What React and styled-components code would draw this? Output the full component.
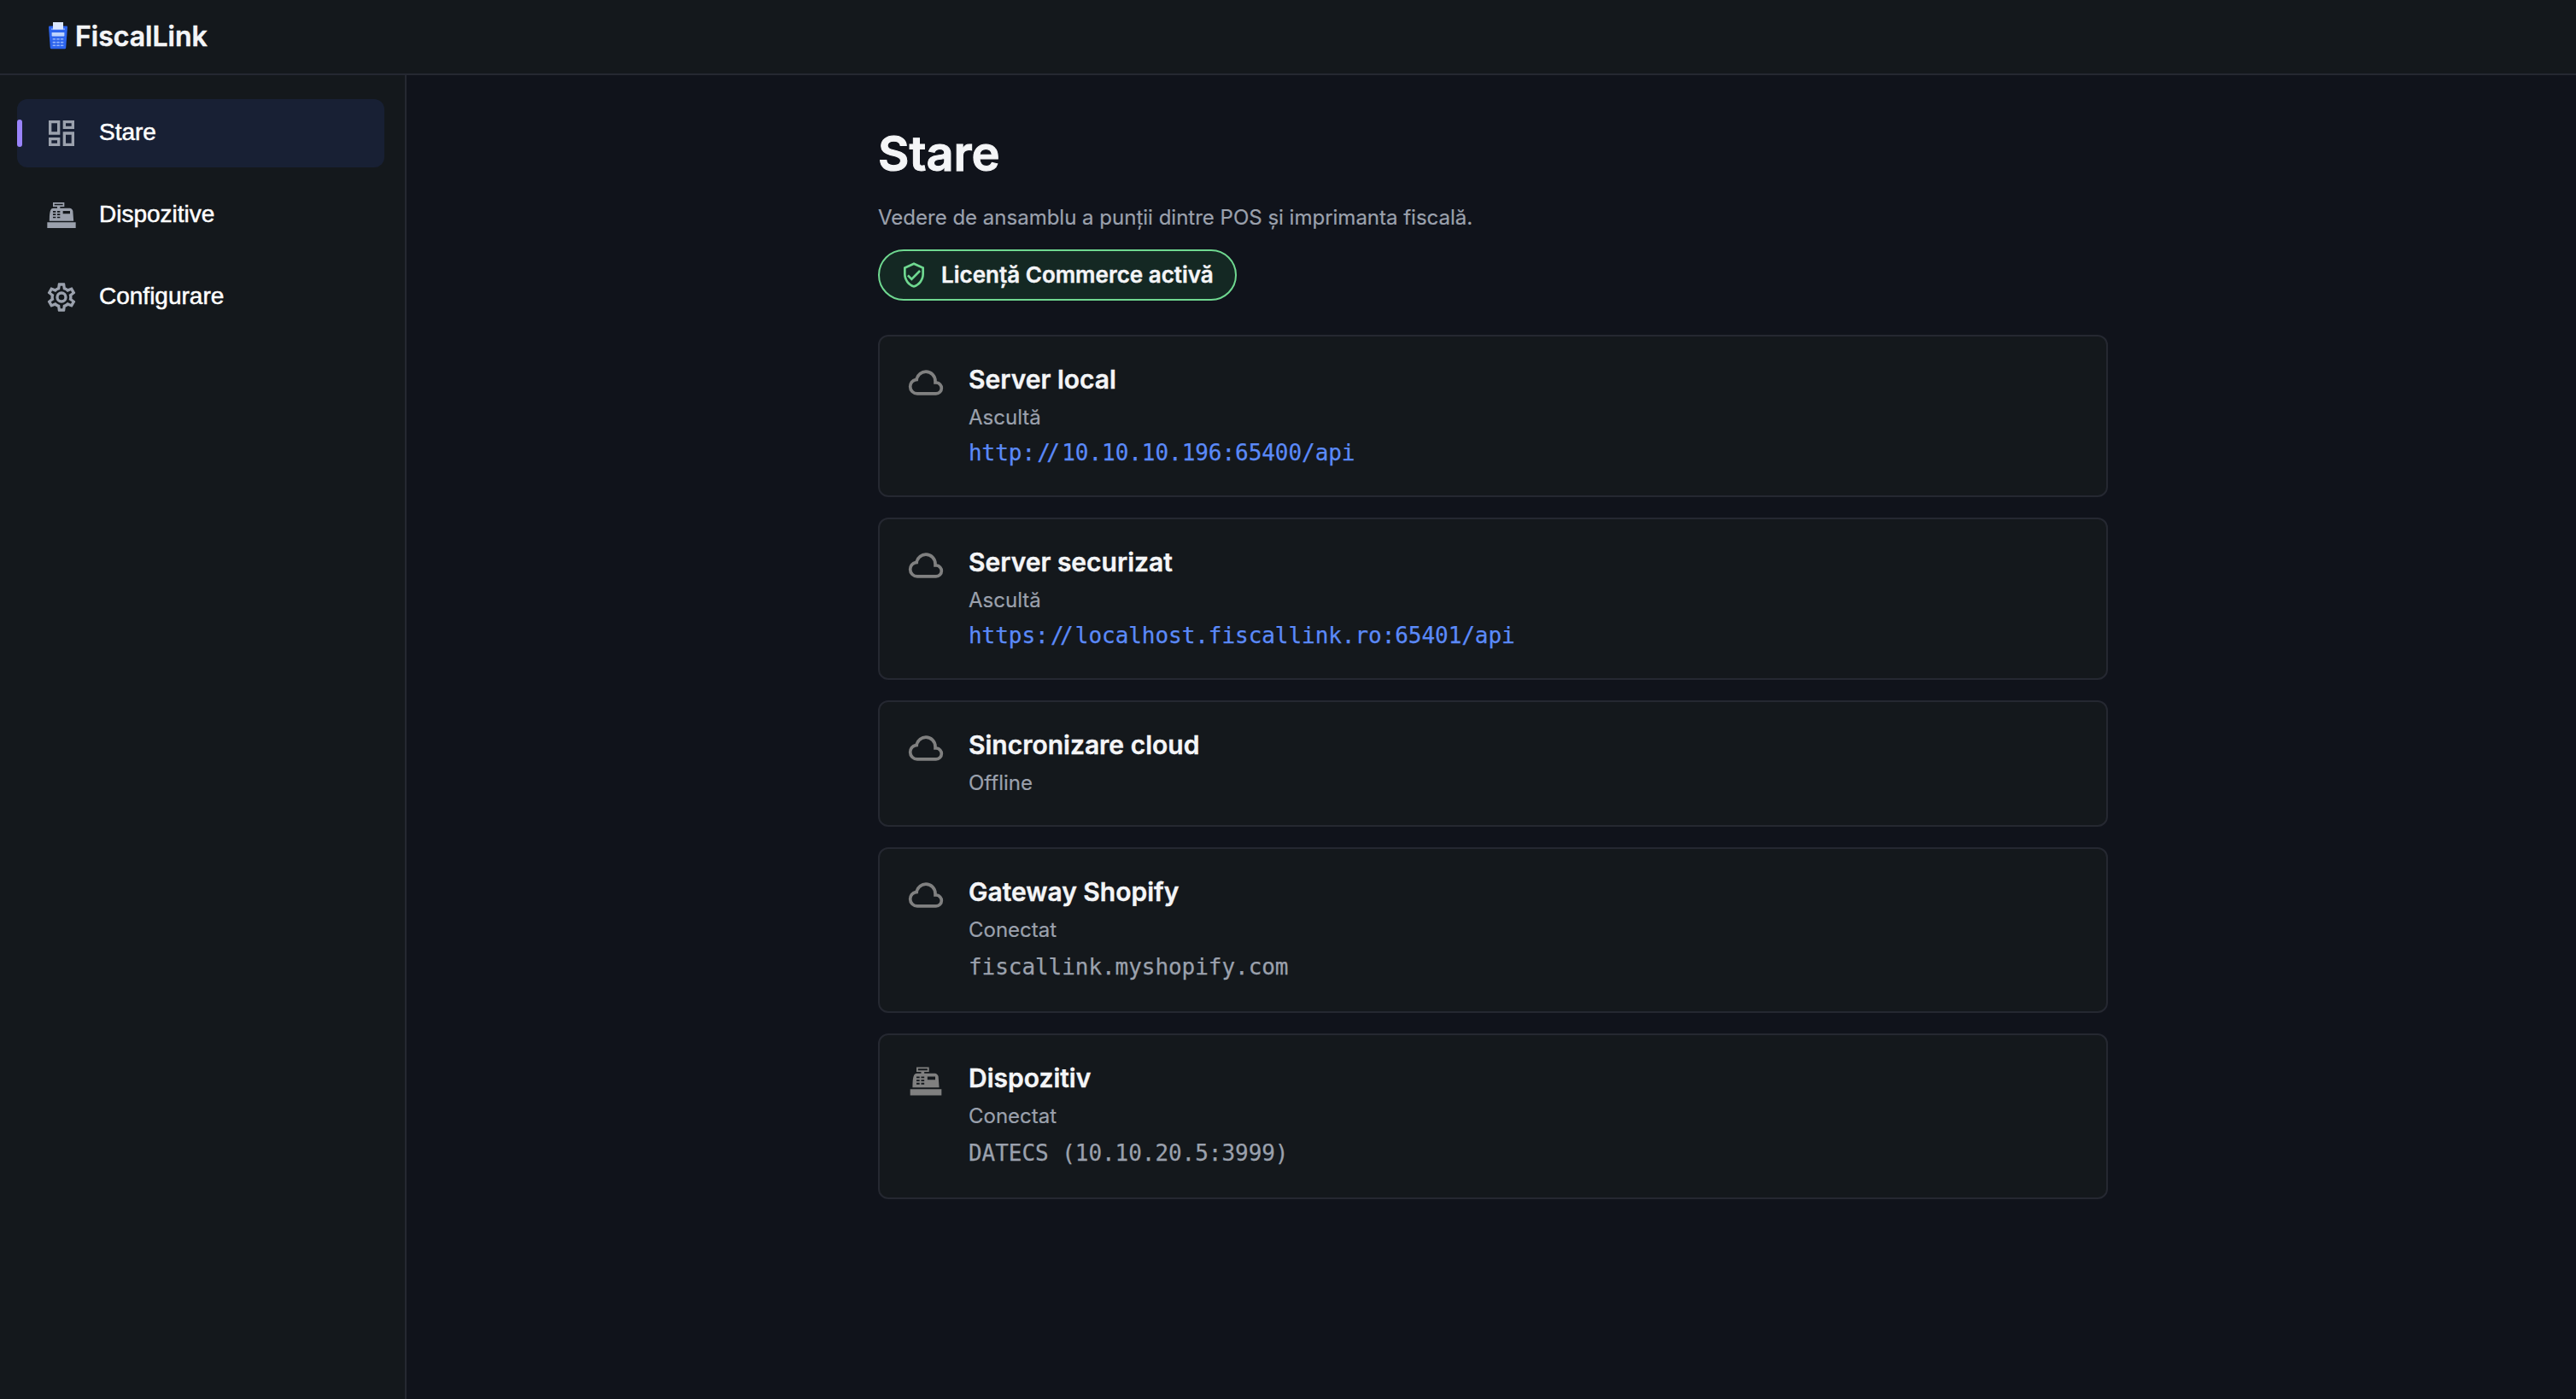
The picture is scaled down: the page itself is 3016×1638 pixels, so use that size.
import React from "react";
import styled, { createGlobalStyle } from "styled-components";

const Global = createGlobalStyle`
  * { box-sizing: border-box; }
  body { margin: 0; background: #10131b; font-family: Inter, "Liberation Sans", sans-serif; -webkit-font-smoothing: antialiased; }
  h1, h2, p { margin: 0; }
`;

const Page = styled.div`
  display: flex;
  flex-direction: column;
  min-height: 100vh;
`;

const Header = styled.header`
  display: flex;
  align-items: center;
  gap: 8px;
  height: 88px;
  padding: 0 0 2px 56px;
  border-bottom: 2px solid #252831;
  background: #14181c;
`;

const Brand = styled.span`
  padding-top: 1px;
  font-size: 32px;
  line-height: 40px;
  font-weight: 600;
  color: #f4f5f7;
  -webkit-text-stroke: 0.5px #f4f5f7;
`;

const Body = styled.div`
  display: flex;
  flex: 1;
`;

const Sidebar = styled.nav`
  display: flex;
  flex-direction: column;
  gap: 16px;
  flex: 0 0 476px;
  padding: 28px 24px 0 20px;
  border-right: 2px solid #252831;
  background: #14181c;
`;

const NavItem = styled.a`
  display: flex;
  align-items: center;
  height: 80px;
  border-radius: 12px;
  background: ${(p) => (p.$active ? "#182034" : "transparent")};
  color: #fff;
  font-family: "Liberation Sans", Arial, sans-serif;
  font-size: 28px;
  line-height: 40px;
  -webkit-text-stroke: 0.5px #fff;
`;

const Indicator = styled.span`
  width: 6px;
  height: 32px;
  margin-right: 26px;
  border-radius: 3px;
  background: ${(p) => (p.$active ? "#9a84fb" : "transparent")};
`;

const NavLabel = styled.span`
  margin-left: 24px;
  padding-bottom: 2px;
`;

const Glyph = styled.svg`
  flex: none;
  width: ${(p) => p.$size}px;
  height: ${(p) => p.$size}px;
  fill: ${(p) => p.$color};
`;

const Main = styled.main`
  display: flex;
  justify-content: center;
  flex: 1;
  padding: 56px 0 0 4px;
`;

const Content = styled.div`
  display: flex;
  flex-direction: column;
  align-items: flex-start;
  width: 1440px;
`;

const Title = styled.h1`
  font-size: 56px;
  line-height: 72px;
  font-weight: 600;
  color: #f4f5f7;
  -webkit-text-stroke: 1px #f4f5f7;
`;

const Subtitle = styled.p`
  margin-top: 19px;
  font-size: 24px;
  line-height: 40px;
  color: #9ba1ad;
  -webkit-text-stroke: 0.2px #9ba1ad;
`;

const License = styled.div`
  display: flex;
  align-items: center;
  gap: 16px;
  height: 60px;
  margin-top: 17px;
  padding: 0 25px 0 24px;
  border: 2px solid #6fd890;
  border-radius: 30px;
  background: #142823;
  font-size: 26px;
  line-height: 40px;
  font-weight: 600;
  color: #f4f5f7;
  -webkit-text-stroke: 0.4px #f4f5f7;
`;

const CardList = styled.div`
  display: flex;
  flex-direction: column;
  gap: 24px;
  width: 100%;
  margin-top: 40px;
`;

const Card = styled.section`
  display: flex;
  gap: 28px;
  padding: 30px 32px 29px;
  border: 2px solid #252831;
  border-radius: 12px;
  background: #14181c;
`;

const IconSlot = styled.div`
  display: flex;
  flex: none;
  padding-top: 2px;
`;

const CardBody = styled.div`
  display: flex;
  flex-direction: column;
  align-items: flex-start;
`;

const CardTitle = styled.h2`
  font-size: 30px;
  line-height: 40px;
  font-weight: 600;
  color: #f4f5f7;
  -webkit-text-stroke: 0.4px #f4f5f7;
`;

const Status = styled.p`
  margin-top: 5px;
  font-size: 24px;
  line-height: 40px;
  color: #9ba1ad;
  -webkit-text-stroke: 0.2px #9ba1ad;
`;

const mono = `
  font-family: "DejaVu Sans Mono", "Liberation Mono", monospace;
  font-size: 26px;
  letter-spacing: -0.052px;
  white-space: pre;
  -webkit-text-stroke: 0.25px currentColor;
`;

const Link = styled.a`
  ${mono}
  line-height: 42px;
  color: #5b8af9;
`;

const Detail = styled.p`
  ${mono}
  margin-top: 1px;
  padding-bottom: 1px;
  line-height: 44px;
  color: #9ba1ad;
`;

const Slashes = styled.span`
  padding-left: 2.3px;
  padding-right: 2.3px;
`;

const FirstSlash = styled.span`
  letter-spacing: -4.65px;
`;

const paths = {
  dashboard:
    "M19,5V7H15V5H19M9,5V11H5V5H9M19,13V19H15V13H19M9,17V19H5V17H9M21,3H13V9H21V3M11,3H3V13H11V3M21,11H13V21H21V11M11,15H3V21H11V15Z",
  register:
    "M2,17H22V21H2V17M6.25,7H9V6H6V3H14V6H11V7H17.8C18.8,7 19.8,8 20,9L20.5,16H3.5C3.55,9 4.3,7 6.25,7M13,9V11H18V9H13M6,9V10H8V9H6M9,9V10H11V9H9M6,11V12H8V11H6M9,11V12H11V11H9M6,13V14H8V13H6M9,13V14H11V13H9M7,4V5H13V4H7Z",
  cog: "M12,8A4,4 0 0,1 16,12A4,4 0 0,1 12,16A4,4 0 0,1 8,12A4,4 0 0,1 12,8M12,10A2,2 0 0,0 10,12A2,2 0 0,0 12,14A2,2 0 0,0 14,12A2,2 0 0,0 12,10M10,22C9.75,22 9.54,21.82 9.5,21.58L9.13,18.93C8.5,18.68 7.96,18.34 7.44,17.94L4.95,18.95C4.73,19.03 4.46,18.95 4.34,18.73L2.34,15.27C2.21,15.05 2.27,14.78 2.46,14.63L4.57,12.97L4.5,12L4.57,11L2.46,9.37C2.27,9.22 2.21,8.95 2.34,8.73L4.34,5.27C4.46,5.05 4.73,4.96 4.95,5.05L7.44,6.05C7.96,5.66 8.5,5.32 9.13,5.07L9.5,2.42C9.54,2.18 9.75,2 10,2H14C14.25,2 14.46,2.18 14.5,2.42L14.87,5.07C15.5,5.32 16.04,5.66 16.56,6.05L19.05,5.05C19.27,4.96 19.54,5.05 19.66,5.27L21.66,8.73C21.79,8.95 21.73,9.22 21.54,9.37L19.43,11L19.5,12L19.43,13L21.54,14.63C21.73,14.78 21.79,15.05 21.66,15.27L19.66,18.73C19.54,18.95 19.27,19.04 19.05,18.95L16.56,17.95C16.04,18.34 15.5,18.68 14.87,18.93L14.5,21.58C14.46,21.82 14.25,22 14,22H10M11.25,4L10.88,6.61C9.68,6.86 8.62,7.5 7.85,8.39L5.44,7.35L4.69,8.65L6.8,10.2C6.4,11.37 6.4,12.64 6.8,13.8L4.68,15.36L5.43,16.66L7.86,15.62C8.63,16.5 9.68,17.14 10.87,17.38L11.24,20H12.76L13.13,17.39C14.32,17.14 15.37,16.5 16.14,15.62L18.57,16.66L19.32,15.36L17.2,13.81C17.6,12.64 17.6,11.37 17.2,10.2L19.31,8.65L18.56,7.35L16.15,8.39C15.38,7.5 14.32,6.86 13.12,6.62L12.75,4H11.25Z",
  shield:
    "M21,11C21,16.55 17.16,21.74 12,23C6.84,21.74 3,16.55 3,11V5L12,1L21,5V11M12,21C15.75,20 19,15.54 19,11.22V6.3L12,3.18L5,6.3V11.22C5,15.54 8.25,20 12,21M10,17L6,13L7.41,11.59L10,14.17L16.59,7.58L18,9",
  cloud:
    "M6.5 20Q4.22 20 2.61 18.43 1 16.85 1 14.58 1 12.63 2.17 11.1 3.35 9.57 5.25 9.15 5.88 6.85 7.75 5.43 9.63 4 12 4 14.93 4 16.96 6.04 19 8.07 19 11 20.73 11.2 21.86 12.5 23 13.78 23 15.5 23 17.38 21.69 18.69 20.38 20 18.5 20M6.5 18H18.5Q19.55 18 20.27 17.27 21 16.55 21 15.5 21 14.45 20.27 13.73 19.55 13 18.5 13H17V11Q17 8.93 15.54 7.46 14.08 6 12 6 9.93 6 8.46 7.46 7 8.93 7 11H6.5Q5.05 11 4.03 12.03 3 13.05 3 14.5 3 15.95 4.03 17 5.05 18 6.5 18Z",
};

function Icon({ name, size, color }) {
  return (
    <Glyph viewBox="0 0 24 24" $size={size} $color={color} aria-hidden="true">
      <path d={paths[name]} />
    </Glyph>
  );
}

function Logo() {
  return (
    <svg width="24" height="34" viewBox="0 0 24 34" aria-hidden="true">
      <path d="M1 6.5Q1 5.5 2 5.5H22Q23 5.5 23 6.5L21.2 31Q21 32.2 19.8 32.2H4.2Q3 32.2 2.8 31Z" fill="#2c64ee" />
      <rect x="4" y="8.4" width="16" height="1.4" fill="#8fb0fa" />
      <rect x="6" y="1" width="12" height="8.4" fill="#dbe7fe" />
      <rect x="4.6" y="13" width="14.8" height="4.4" rx="0.6" fill="#bdd3fd" />
      {[20, 23.8, 27.4].map((y) =>
        [5.6, 10.2, 14.8].map((x) => (
          <rect key={`${x}-${y}`} x={x} y={y} width="3.6" height="1.6" rx="0.6" fill="#93b4fb" />
        ))
      )}
    </svg>
  );
}

function Url({ text }) {
  const [scheme, rest] = text.split("//");
  return (
    <Link>
      {scheme}
      <Slashes>
        <FirstSlash>/</FirstSlash>/
      </Slashes>
      {rest}
    </Link>
  );
}

const nav = [
  { label: "Stare", icon: "dashboard", active: true },
  { label: "Dispozitive", icon: "register" },
  { label: "Configurare", icon: "cog" },
];

const cards = [
  { title: "Server local", icon: "cloud", status: "Ascultă", url: "http://10.10.10.196:65400/api" },
  { title: "Server securizat", icon: "cloud", status: "Ascultă", url: "https://localhost.fiscallink.ro:65401/api" },
  { title: "Sincronizare cloud", icon: "cloud", status: "Offline" },
  { title: "Gateway Shopify", icon: "cloud", status: "Conectat", detail: "fiscallink.myshopify.com" },
  { title: "Dispozitiv", icon: "register", status: "Conectat", detail: "DATECS (10.10.20.5:3999)" },
];

export default function App() {
  return (
    <Page>
      <Global />
      <Header>
        <Logo />
        <Brand>FiscalLink</Brand>
      </Header>
      <Body>
        <Sidebar>
          {nav.map((n) => (
            <NavItem key={n.label} $active={n.active}>
              <Indicator $active={n.active} />
              <Icon name={n.icon} size={40} color="#9ba1ad" />
              <NavLabel>{n.label}</NavLabel>
            </NavItem>
          ))}
        </Sidebar>
        <Main>
          <Content>
            <Title>Stare</Title>
            <Subtitle>Vedere de ansamblu a punții dintre POS și imprimanta fiscală.</Subtitle>
            <License>
              <Icon name="shield" size={32} color="#6fd890" />
              Licență Commerce activă
            </License>
            <CardList>
              {cards.map((c) => (
                <Card key={c.title}>
                  <IconSlot>
                    <Icon name={c.icon} size={44} color="#808080" />
                  </IconSlot>
                  <CardBody>
                    <CardTitle>{c.title}</CardTitle>
                    <Status>{c.status}</Status>
                    {c.url && <Url text={c.url} />}
                    {c.detail && <Detail>{c.detail}</Detail>}
                  </CardBody>
                </Card>
              ))}
            </CardList>
          </Content>
        </Main>
      </Body>
    </Page>
  );
}
